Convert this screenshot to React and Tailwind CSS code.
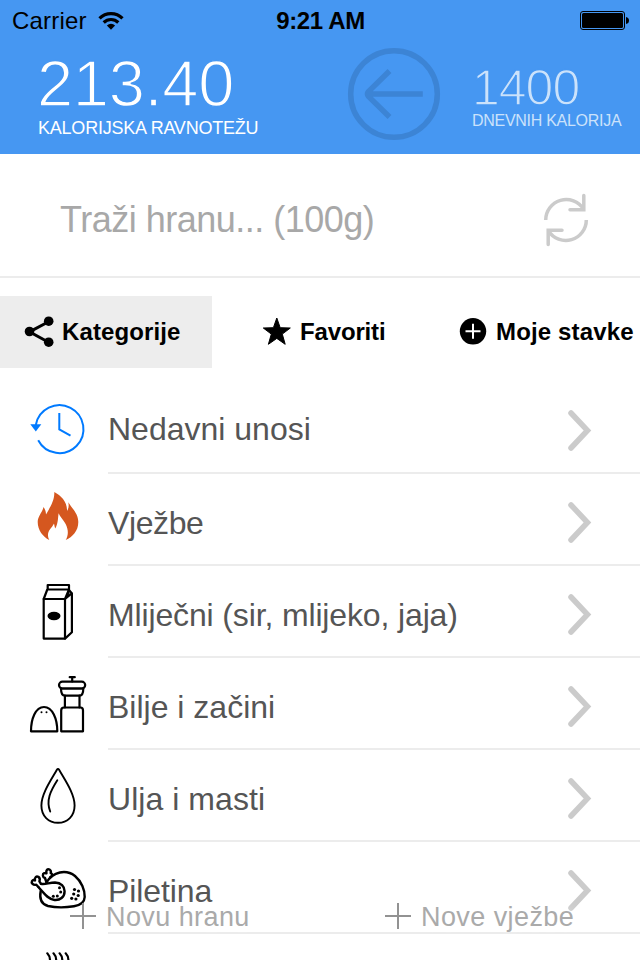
const line = {
  fill: "none",
  stroke: "#000",
  strokeWidth: 2.2,
  strokeLinecap: "round",
  strokeLinejoin: "round",
};

function HistoryIcon() {
  return (
    <svg viewBox="24 382 68 92" className="h-[92px] w-[68px] shrink-0">
      <g fill="none" stroke="#007aff" strokeWidth="2">
        <path d="M35.8 425A24 24 0 1 1 38.2 440.3" />
        <path d="M59.3 413V429.3L70.5 435.6" />
      </g>
      <path d="M30.3 424.3H41.3L35.8 431.5Z" fill="#007aff" />
    </svg>
  );
}

function FlameIcon() {
  return (
    <svg viewBox="24 474 68 92" className="h-[92px] w-[68px] shrink-0">
      <path
        fill="#d5571f"
        d="M54.3 492C61 495.500 67.500 502 67 511C68.800 508.500 69 505.500 68.300 502.300C72 508.500 78.300 513.500 78.300 522C78.300 531 72.500 537 65.700 540C67.500 537 68.500 533 67.300 528.500C66 522 61.500 519.500 58.600 513.300C57.800 518.500 58.300 523 55.300 528.500C54.500 527 54.600 525.500 54 523.500C52 528 48 530 48 535C48 537 48.500 538.500 49.300 540C43 537 37.700 530 37.700 522C37.700 516 42.500 512.500 43.500 507C45 509 46 511.500 46 514.500C49 509 54.800 501 54.300 492Z"
      />
    </svg>
  );
}

function MilkIcon() {
  return (
    <svg viewBox="24 566 68 92" className="h-[92px] w-[68px] shrink-0">
      <g {...line}>
        <path d="M43.700 599H65V638.600H43.700Z" />
        <path d="M65 638.600L71.900 632.300V593.500L69 590" />
        <path d="M47.700 585H69V589.500H47.700ZM47.300 589.500L43.700 599M69 589.500L65 599L71.700 593.500" />
        <path d="M68.800 590V595.500" strokeWidth="1.500" />
      </g>
      <ellipse cx="54" cy="616" rx="6.500" ry="4.200" />
    </svg>
  );
}

function SpicesIcon() {
  return (
    <svg viewBox="24 658 68 92" className="h-[92px] w-[68px] shrink-0">
      <g {...line}>
        <path d="M31 731.300C31 719 35.500 707 44 707C52.500 707 57.300 719 57.300 731.300Z" />
        <path d="M69.700 677.200H74.800M72.200 677V681.500" />
        <rect x="59" y="681.700" width="26.200" height="6.800" rx="3.400" />
        <path d="M61 688.500H83.300C83.300 693 82 695.700 79.500 695.700H65C62.300 695.700 61 693 61 688.500Z" />
        <path d="M64.900 695.700V707.500M79.500 695.700V707.500" />
        <path d="M64 707.500H80.500Q83 707.500 83 710.500V731.300H61.200V710.500Q61.200 707.500 64 707.500Z" />
      </g>
      <circle cx="41.500" cy="712.200" r="1" />
      <circle cx="46.500" cy="712.200" r="1" />
    </svg>
  );
}

function DropIcon() {
  return (
    <svg viewBox="24 750 68 92" className="h-[92px] w-[68px] shrink-0">
      <g {...line} strokeWidth="1.900">
        <path d="M56.900 769.800Q58 767.900 59.100 769.800C64.500 779.500 74.600 793.500 74.600 805.500C74.600 816 67.500 822.800 58 822.800C48.500 822.800 41.400 816 41.400 805.500C41.400 793.500 51.500 779.500 56.900 769.800Z" />
        <path d="M57.300 780.300C50.500 791 45.800 800.500 50.200 811.500" />
      </g>
    </svg>
  );
}

function ChickenIcon() {
  return (
    <svg viewBox="24 842 68 92" className="h-[92px] w-[68px] shrink-0">
      <g {...line} strokeWidth="2.400">
        <path d="M46.500 882.500C53 871.500 66 869 75 876C81.500 881.500 85 890 84.700 897C84.400 903 80 905.300 74 906.300C66 907.600 55 907.600 48 906C40.500 904 39.300 898.500 40.700 891" />
        <path d="M41 883.800C45 884.800 49 882.600 55 882.500C61 882.700 64.600 886.500 64.600 891.200C64.600 897 60 900.500 54.500 900C47.500 899.300 43.500 892.500 38.600 887.300" />
        <path d="M38.600 887.300L36.300 884.700C33 885.500 31 882.800 32 881.100C32.800 879.800 34.300 880 35 880.400C34.300 877.300 36.500 875.900 38.400 876.900C40.400 878.100 39.800 880.300 39.400 881.400L41 883.800" />
        <path d="M46.500 882.500L45 878C42.300 877.200 42.300 873.900 44.200 873.200C45.500 872.900 46.200 873.600 46.500 873.200C45.600 870.300 47.600 868.500 49.500 869.500C51.300 870.500 51 872 50.700 873.100C52.800 873.600 52.500 876.800 50.300 877" />
      </g>
      <g>
        <circle cx="59.500" cy="887.700" r="1.500" />
        <circle cx="60.700" cy="892" r="1.500" />
        <circle cx="57.300" cy="896" r="1.500" />
        <circle cx="53.300" cy="896.200" r="1.500" />
        <circle cx="74.500" cy="889.500" r="1.600" />
        <circle cx="78.500" cy="891" r="1.600" />
        <circle cx="73.700" cy="894" r="1.600" />
        <circle cx="78.200" cy="895.500" r="1.600" />
        <circle cx="71.700" cy="898.300" r="1.600" />
        <circle cx="75.900" cy="899" r="1.600" />
      </g>
    </svg>
  );
}

function SteamIcon() {
  return (
    <svg viewBox="24 934 68 26" className="h-[26px] w-[68px] shrink-0">
      <g {...line}>
        <path d="M47.300 953.300C50 956 50.300 958 50 962M53.500 953.300C56.200 956 56.500 958 56.200 962M59.600 953.300C62.300 956 62.600 958 62.300 962M65.700 953.300C68.400 956 68.700 958 68.400 962" />
      </g>
    </svg>
  );
}

const rows = [
  { label: "Nedavni unosi", Icon: HistoryIcon, text: "pt-1" },
  { label: "Vježbe", Icon: FlameIcon, text: "pt-2 tracking-[-0.4px]" },
  { label: "Mliječni (sir, mlijeko, jaja)", Icon: MilkIcon, text: "pt-2 tracking-[-0.14px]" },
  { label: "Bilje i začini", Icon: SpicesIcon, text: "pt-2" },
  { label: "Ulja i masti", Icon: DropIcon, text: "pt-2 tracking-[0.05px]" },
  { label: "Piletina", Icon: ChickenIcon, text: "pt-2 tracking-[-0.1px]" },
];

function Row({ label, Icon, text }) {
  return (
    <li className="flex h-[92px] pl-6">
      <Icon />
      <div className="ml-4 flex flex-1 items-center justify-between border-b-2 border-[#ececec] pr-[47px]">
        <span className={`text-[32px] leading-10 whitespace-nowrap text-[#555] ${text}`}>{label}</span>
        <svg viewBox="0 0 28 44" className="mt-2 h-11 w-7">
          <path d="M5 2.500L24 21.500L5 40.500" fill="none" stroke="none" />
          <path d="M6 4L22.500 21.500L6 39" fill="none" stroke="#cbcbcb" strokeWidth="5.500" strokeLinecap="round" />
        </svg>
      </div>
    </li>
  );
}

function StatusBar() {
  return (
    <div className="grid h-10 grid-cols-3 items-center pr-[11px] pl-3 text-2xl leading-none text-black">
      <div className="flex items-center gap-[11px]">
        <span className="pt-0.5 tracking-[0.2px]">Carrier</span>
        <svg viewBox="0 0 26 19" className="h-[19px] w-[26px]">
          <g fill="none" stroke="#000" strokeWidth="3.200">
            <path d="M1.500 7.300A16.300 16.300 0 0 1 24.500 7.300" />
            <path d="M5.700 11.500A10.400 10.400 0 0 1 20.300 11.500" />
          </g>
          <path d="M13 18.700L8.900 14.500A5.900 5.900 0 0 1 17.100 14.500Z" />
        </svg>
      </div>
      <span className="pt-0.5 text-center font-bold tracking-[-0.35px] whitespace-nowrap">9:21 AM</span>
      <svg viewBox="0 0 49 19" className="h-[19px] w-[49px] justify-self-end">
        <rect x="0.500" y="0.500" width="44" height="18" rx="2.500" fill="none" stroke="#000" />
        <rect x="2" y="2" width="41" height="15" rx="1.500" />
        <path d="M46 6Q49 6.500 49 9.500Q49 12.500 46 13Z" />
      </svg>
    </div>
  );
}

function AddButton({ label, className }) {
  return (
    <button className={`absolute flex items-start gap-[10px] ${className}`}>
      <svg viewBox="0 0 26 26" className="mt-0.5 h-[26px] w-[26px]">
        <path d="M13 0V26M0 13H26" stroke="#929292" strokeWidth="2" />
      </svg>
      <span className="pt-0.5 text-[27px] leading-7 tracking-[0.42px] whitespace-nowrap text-[#aaa] [text-shadow:0_0_14px_#fff]">
        {label}
      </span>
    </button>
  );
}

export default function App() {
  return (
    <div className="relative h-[960px] w-[640px] overflow-hidden bg-white font-['Liberation_Sans',Arial,sans-serif]">
      <header className="flex h-[154px] flex-col bg-[#4697f2] text-white">
        <StatusBar />
        <div className="flex pl-[37px]">
          <div className="w-[308px] pt-[11px]">
            <div className="text-[65px] leading-[66px] tracking-[-0.3px] [-webkit-text-stroke:1.5px_#4697f2]">213.40</div>
            <div className="pt-px pl-px text-lg leading-5 tracking-[-0.22px] whitespace-nowrap">KALORIJSKA RAVNOTEŽU</div>
          </div>
          <svg viewBox="345 45 98 98" className="mt-[5px] h-[98px] w-[98px] shrink-0">
            <g fill="none" stroke="#3c84d5" strokeWidth="5.500">
              <circle cx="394" cy="94" r="43.300" />
              <path d="M422.800 94H368M389.500 71L368.500 91.500Q366.500 94 368.500 96.500L389.500 117" />
            </g>
          </svg>
          <div className="ml-[29px] pt-[23px] text-[#cbe2fb]">
            <div className="text-[50px] leading-[50px] tracking-[-1px] [-webkit-text-stroke:1.4px_#4697f2]">1400</div>
            <div className="text-base leading-4 tracking-[-0.28px] whitespace-nowrap">DNEVNIH KALORIJA</div>
          </div>
        </div>
      </header>

      <div className="flex h-[124px] items-center justify-between border-b-2 border-[#ececec] pr-[50px] pl-[60px]">
        <span className="pt-[10px] text-4xl tracking-[-0.5px] text-[#a8a8a8]">Traži hranu... (100g)</span>
        <svg viewBox="542 192 48 56" className="mt-[10px] h-14 w-12">
          <g fill="none" stroke="#cbcbcb" strokeWidth="3.500">
            <path d="M545.700 220A20.500 20.500 0 0 1 583.500 209" />
            <path d="M586.300 220A20.500 20.500 0 0 1 548.500 231" />
            <path d="M583.800 195.500V209.700H570M548.200 244.500V230.300H562" strokeLinecap="round" />
          </g>
        </svg>
      </div>

      <nav className="mt-[18px] flex h-[72px] text-2xl font-bold text-black">
        <div className="flex w-[212px] items-center gap-2 bg-[#ededed] pl-6">
          <svg viewBox="24 315 30 32" className="h-8 w-[30px]">
            <path d="M49 320.500L29.500 330.800L49 341.500" fill="none" stroke="#000" strokeWidth="3" />
            <circle cx="48.700" cy="320.200" r="4.800" />
            <circle cx="29.500" cy="330.500" r="4.800" />
            <circle cx="48.700" cy="341.200" r="4.800" />
          </svg>
          <span className="tracking-[0.12px]">Kategorije</span>
        </div>
        <div className="flex w-[247px] items-center gap-2 pl-[50px]">
          <svg viewBox="0 0 30 30" className="h-[30px] w-[30px]">
            <path d="M14.800 1L18.200 10.700L28.300 11L20.300 17.100L23.200 27.300L14.800 21.400L6.400 27.300L9.300 17.100L1.300 11L11.400 10.700Z" strokeWidth="1" stroke="#000" strokeLinejoin="round" />
          </svg>
          <span className="tracking-[-0.15px]">Favoriti</span>
        </div>
        <div className="flex items-center gap-[9px]">
          <svg viewBox="0 0 28 28" className="h-7 w-7">
            <circle cx="14" cy="13.300" r="13.200" />
            <path d="M14 5.800V20.800M6.500 13.300H21.500" stroke="#fff" strokeWidth="2" />
          </svg>
          <span className="tracking-[0.15px] whitespace-nowrap">Moje stavke</span>
        </div>
      </nav>

      <ul className="mt-[14px]">
        {rows.map((row) => (
          <Row key={row.label} {...row} />
        ))}
        <li className="flex pl-6">
          <SteamIcon />
        </li>
      </ul>

      <AddButton label="Novu hranu" className="top-[901px] left-[70px]" />
      <AddButton label="Nove vježbe" className="top-[901px] left-[385px]" />
    </div>
  );
}
